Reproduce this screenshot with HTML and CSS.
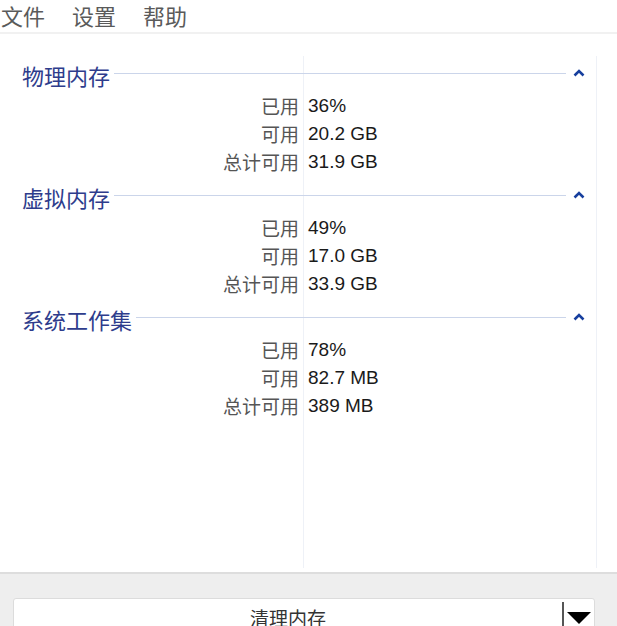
FILE: index.html
```html
<!DOCTYPE html>
<html lang="zh">
<head>
<meta charset="utf-8">
<link rel="stylesheet" href="styles.css">
</head>
<body>
<div class="app">
  <nav class="menubar">
    <span class="menu-item">文件</span>
    <span class="menu-item">设置</span>
    <span class="menu-item">帮助</span>
  </nav>
  <main class="main">
    <div class="panel">
      <section class="group">
        <div class="group-head">
          <span class="group-title">物理内存</span>
          <span class="group-line"></span>
          <svg class="chevron" width="12" height="8" viewBox="0 0 12 8"><path d="M1.5 6.5 L6 2 L10.5 6.5" fill="none" stroke="#173f9e" stroke-width="2.6"/></svg>
        </div>
        <div class="rows">
          <span class="label">已用</span><span class="value">36%</span>
          <span class="label">可用</span><span class="value">20.2 GB</span>
          <span class="label">总计可用</span><span class="value">31.9 GB</span>
        </div>
      </section>
      <section class="group">
        <div class="group-head">
          <span class="group-title">虚拟内存</span>
          <span class="group-line"></span>
          <svg class="chevron" width="12" height="8" viewBox="0 0 12 8"><path d="M1.5 6.5 L6 2 L10.5 6.5" fill="none" stroke="#173f9e" stroke-width="2.6"/></svg>
        </div>
        <div class="rows">
          <span class="label">已用</span><span class="value">49%</span>
          <span class="label">可用</span><span class="value">17.0 GB</span>
          <span class="label">总计可用</span><span class="value">33.9 GB</span>
        </div>
      </section>
      <section class="group">
        <div class="group-head">
          <span class="group-title">系统工作集</span>
          <span class="group-line"></span>
          <svg class="chevron" width="12" height="8" viewBox="0 0 12 8"><path d="M1.5 6.5 L6 2 L10.5 6.5" fill="none" stroke="#173f9e" stroke-width="2.6"/></svg>
        </div>
        <div class="rows">
          <span class="label">已用</span><span class="value">78%</span>
          <span class="label">可用</span><span class="value">82.7 MB</span>
          <span class="label">总计可用</span><span class="value">389 MB</span>
        </div>
      </section>
    </div>
  </main>
  <footer class="footer">
    <div class="split-button">
      <span class="btn-main">清理内存</span>
      <span class="btn-drop"><span class="triangle"></span></span>
    </div>
  </footer>
</div>
</body>
</html>
```

FILE: styles.css
```css
* { box-sizing: border-box; }
html, body { margin: 0; padding: 0; }
body {
  width: 617px;
  height: 626px;
  overflow: hidden;
  background: #ffffff;
  font-family: "Liberation Sans", "Noto Sans CJK SC", sans-serif;
}
.app {
  display: flex;
  flex-direction: column;
  height: 626px;
}
.menubar {
  flex-shrink: 0;
  height: 34px;
  display: flex;
  gap: 27px;
  padding-left: 1px;
  align-items: flex-start;
  border-bottom: 2px solid #f1f1f1;
}
.menu-item {
  font-family: "Noto Sans CJK SC", sans-serif;
  font-size: 22px;
  line-height: 31px;
  color: #5a5a5a;
}
.main {
  flex-shrink: 0;
  height: 538px;
  padding-top: 22px;
  padding-bottom: 4px;
  background: #ffffff;
}
.panel {
  width: 597px;
  height: 100%;
  border-right: 1px solid #eef1f7;
  background-image: linear-gradient(to right, transparent 303px, #eef1f7 303px, #eef1f7 304px, transparent 304px);
  padding-top: 7px;
  display: flex;
  flex-direction: column;
  gap: 9px;
}
.group-head {
  display: flex;
  align-items: center;
  height: 24px;
  padding-left: 22px;
  padding-right: 11px;
}
.group-title {
  font-family: "Noto Sans CJK SC", sans-serif;
  font-size: 22px;
  line-height: 24px;
  color: #2e3c8c;
  background: #fff;
}
.group-line {
  flex: 1;
  height: 1px;
  background: #cbd5ea;
  margin-left: 4px;
  margin-right: 7px;
  margin-top: -3px;
}
.chevron { display: block; margin-top: -4px; }
.rows {
  margin-top: 5px;
  display: grid;
  grid-template-columns: 299px 1fr;
  column-gap: 9px;
}
.label {
  font-family: "Noto Sans CJK SC", sans-serif;
  font-size: 19px;
  line-height: 28px;
  color: #555555;
  text-align: right;
}
.value {
  font-family: "Liberation Sans", sans-serif;
  font-size: 19px;
  line-height: 28px;
  color: #1a1a1a;
}
.footer {
  flex: 1;
  min-height: 0;
  overflow: hidden;
  background: #eeeeee;
  border-top: 2px solid #dddddd;
  padding: 24px 22px 0 13px;
}
.split-button {
  display: flex;
  height: 36px;
  background: #ffffff;
  border: 1px solid #dcdcdc;
  border-radius: 3px;
}
.btn-main {
  flex: 1;
  text-align: center;
  font-family: "Noto Sans CJK SC", sans-serif;
  font-size: 19px;
  line-height: 28px;
  color: #333333;
  padding-top: 5px;
}
.btn-drop {
  width: 32px;
  margin-top: 3px;
  border-left: 2px solid #555555;
  display: flex;
  justify-content: flex-start;
  padding-left: 3px;
  padding-top: 10px;
}
.triangle {
  width: 0;
  height: 0;
  border-left: 12px solid transparent;
  border-right: 12px solid transparent;
  border-top: 12px solid #000000;
}
```
